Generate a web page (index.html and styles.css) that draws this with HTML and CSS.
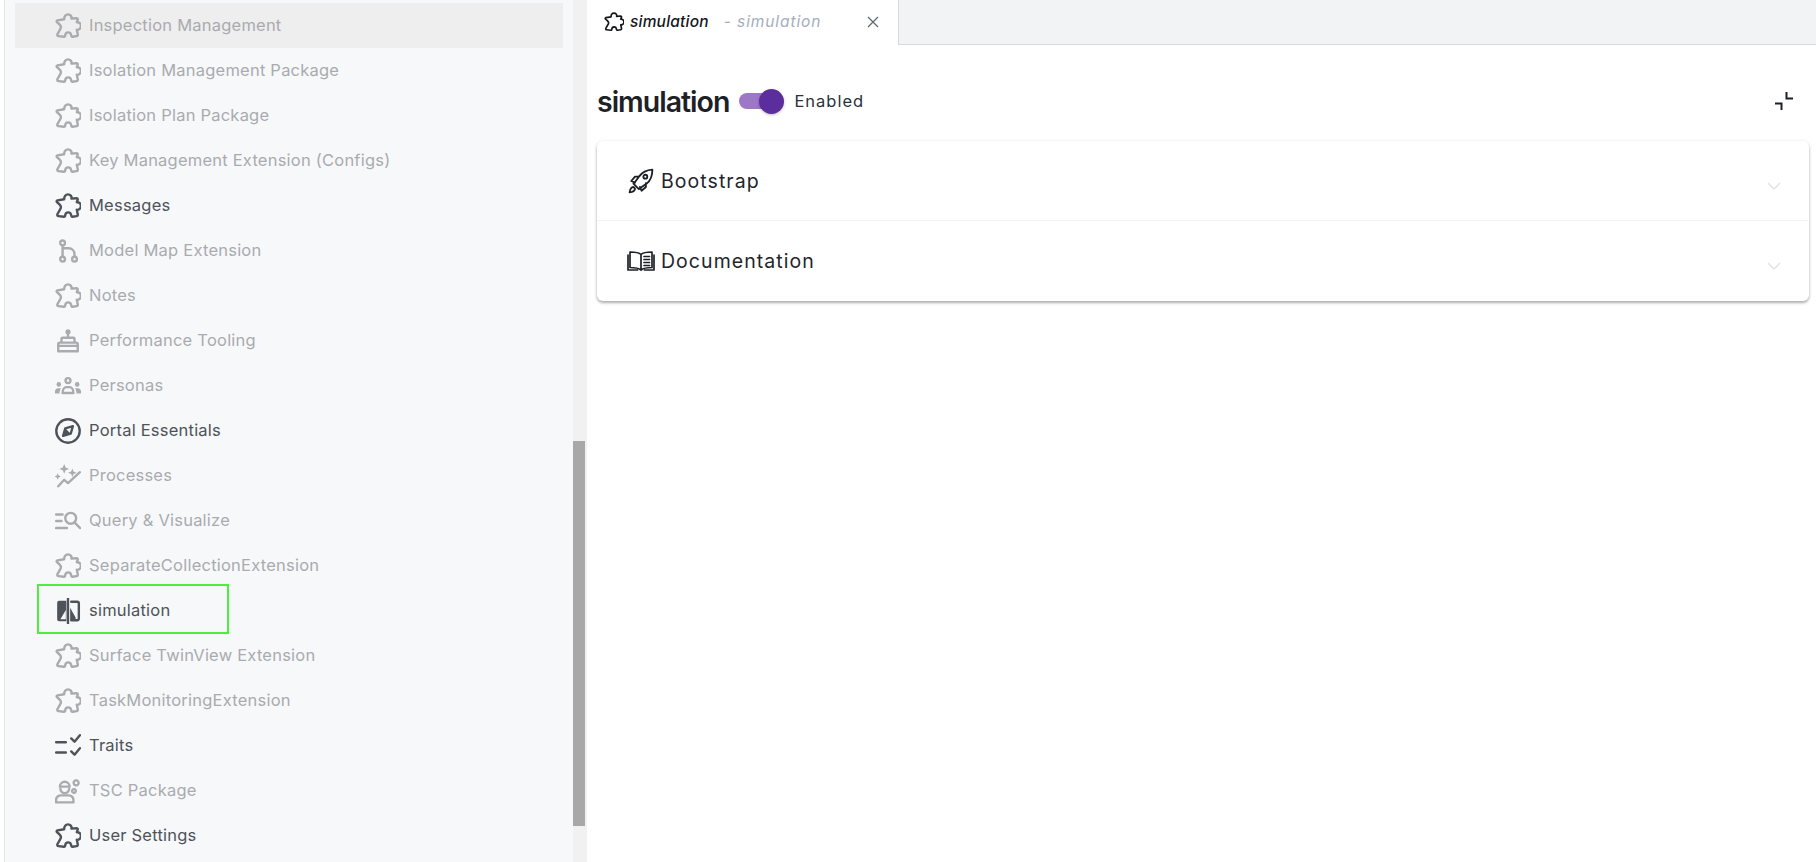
FILE: index.html
```html
<!DOCTYPE html>
<html lang="en">
<head>
<meta charset="utf-8">
<title>simulation</title>
<link rel="stylesheet" href="styles.css">
</head>
<body>
<svg class="defs" width="0" height="0" aria-hidden="true">
  <symbol id="puzzle" viewBox="0 0 24 24"><path d="M8.500 5.800C8.300 3 10 1.300 12 1.300c2 0 3.700 1.700 3.200 3.900l4.500-.4c1 0 1.400.6 1.300 1.300l-.9 2.400c2.300-.2 3.800 1.500 3.800 3.500 0 2.200-1.800 3.800-3.800 3.500l.9 4.200c.2.900-.3 1.500-1 1.600l-3.800.6c-.7.100-1-.2-1.100-.8-.3-1.900-1.500-3.200-2.900-3.200-1.500 0-2.700 1.300-2.900 3.100-.1.700-.5 1-1.100.9l-5-.6c-1-.1-1.300-.9-1-1.700l2.400-4.300c.8-1.100 1-2 .8-2.800-.2-.8-.8-1.400-1.400-2.100L1.800 8.500c-.6-.8-.3-1.500.5-1.700z"/></symbol>
  <symbol id="branch" viewBox="0 0 24 24"><circle cx="7" cy="4.500" r="2.200"/><circle cx="7" cy="19.500" r="2.200"/><circle cx="18" cy="19.500" r="2.200"/><path d="M7 6.700v10.600M7 9.500h5.500c3.300 0 5.500 2.400 5.500 5.500v2.300"/></symbol>
  <symbol id="cake" viewBox="0 0 24 24"><path d="M3 21.500h18v-6.500a1.500 1.500 0 0 0-1.500-1.500h-15a1.500 1.500 0 0 0-1.500 1.500zM3 16.500h18M6 13.500v-3.500a1 1 0 0 1 1-1h10a1 1 0 0 1 1 1v3.500M12 9v-4"/><circle cx="12" cy="3.500" r="1.300" class="solid"/></symbol>
  <symbol id="people" viewBox="0 0 24 24"><g class="solid nostroke"><circle cx="3.500" cy="10.500" r="2.100"/><circle cx="20.500" cy="10.500" r="2.100"/><path d="M-.5 19c0-3 1.500-5 3-5h3c-.8 1.300-1.300 3-1.300 5zM24.500 19c0-3-1.500-5-3-5h-3c.8 1.300 1.300 3 1.300 5z"/></g><circle cx="12" cy="7" r="2.300"/><path d="M7 18.500c0-3.500 1.800-5.500 3.500-5.500h3c1.700 0 3.500 2 3.500 5.500z"/></symbol>
  <symbol id="compass" viewBox="0 0 24 24"><circle cx="12" cy="12" r="10.800"/><path d="M16.500 7.500 14.500 14.500 7.500 16.500 9.500 9.500z"/><path class="solid nostroke" d="M7.500 16.500 9.500 9.500 14.500 14.500z"/></symbol>
  <symbol id="sparkle" viewBox="0 0 24 24"><path d="M3 21.500 8.500 15.500l3.500 3L23 8.500"/><path class="solid nostroke" d="M8.500 1l1.300 3.200 3.200 1.300-3.200 1.300-1.300 3.200-1.300-3.200L4 5.500l3.200-1.300zM16 5l1.100 2.900 2.900 1.100-2.900 1.100-1.100 2.900-1.100-2.900L12 9l2.900-1.100zM2.500 9.500l.9 2.100 2.100.9-2.100.9-.9 2.100-.9-2.100-2.100-.9 2.100-.9z"/></symbol>
  <symbol id="query" viewBox="0 0 24 24"><path d="M1 6h6M1 12h5M1 18.500h10"/><circle cx="14.500" cy="9.500" r="5"/><path d="M18 13.300l5.200 5.200"/></symbol>
  <symbol id="split" viewBox="0 0 24 24"><path class="solid nostroke" fill-rule="evenodd" d="M3.800 2.500h6.700v19H3.800A1.800 1.800 0 0 1 2 19.700V4.300a1.800 1.800 0 0 1 1.800-1.800zM10 11 5 19.500h5z"/><path d="M12 0v24"/><path d="M15 3.500h5.500a1.500 1.500 0 0 1 1.500 1.500v14a1.500 1.500 0 0 1-1.500 1.500H15"/><path class="solid nostroke" d="M14 9l5 9v2h-5z"/></symbol>
  <symbol id="traits" viewBox="0 0 24 24"><path d="M1 8.500h9M1 18h9M15 5l3 3 5-6M15 17l3 3 5-6"/></symbol>
  <symbol id="worker" viewBox="0 0 24 24"><path d="M4.500 8a4.500 4.500 0 0 1 9 0zM5 10a4 4 0 0 0 8 0"/><path d="M1 22.500v-2.500c0-2.500 2.500-4 4.500-4h7c2 0 4.500 1.500 4.500 4v2.500z"/><circle cx="19.500" cy="4.500" r="2.300" stroke-dasharray="1.600 .8"/><circle cx="17.500" cy="12" r="1.700" stroke-dasharray="1.300 .7"/></symbol>
  <symbol id="rocket" viewBox="0 0 24 24"><path d="M22.500 1.500c-5.500.3-9.500 2.500-12.500 6.500l-3.500 5-1.500 1.500 5 5 2-1.500 5-3.500c4-3 5.500-7 5.500-13zM10 8H6.500l-3.500 4 3.500 1.500M16.500 14v3.500l-4 3.500-1.500-3.500"/><circle cx="16" cy="8" r="1.800"/><path d="M5 17.500c-1.800.3-3 1.700-3.500 5 3-.3 4.800-1.700 5-3.500z"/></symbol>
  <symbol id="book" viewBox="0 0 28 24"><path d="M14 5.500C12 3.500 9 3 3 3v15.500c5.500 0 8.500.5 11 2.500 2.500-2 5.500-2.500 11-2.500V3C19 3 16 3.500 14 5.500zM14 5.500V21M1 6v15h9.500M27 6v15h-9.500M17 7.500h5.500M17 10.500h5.500M17 13.500h5.500M17 16.500h5.500"/></symbol>
</svg>

<div class="page">
  <div class="edge"></div>
  <aside class="sidebar">
    <ul class="nav">
      <li class="row muted hover"><svg class="ico"><use href="#puzzle"/></svg><span>Inspection Management</span></li>
      <li class="row muted"><svg class="ico"><use href="#puzzle"/></svg><span>Isolation Management Package</span></li>
      <li class="row muted"><svg class="ico"><use href="#puzzle"/></svg><span>Isolation Plan Package</span></li>
      <li class="row muted"><svg class="ico"><use href="#puzzle"/></svg><span>Key Management Extension (Configs)</span></li>
      <li class="row"><svg class="ico"><use href="#puzzle"/></svg><span>Messages</span></li>
      <li class="row muted"><svg class="ico"><use href="#branch"/></svg><span>Model Map Extension</span></li>
      <li class="row muted"><svg class="ico"><use href="#puzzle"/></svg><span>Notes</span></li>
      <li class="row muted"><svg class="ico"><use href="#cake"/></svg><span>Performance Tooling</span></li>
      <li class="row muted"><svg class="ico"><use href="#people"/></svg><span>Personas</span></li>
      <li class="row"><svg class="ico"><use href="#compass"/></svg><span>Portal Essentials</span></li>
      <li class="row muted"><svg class="ico"><use href="#sparkle"/></svg><span>Processes</span></li>
      <li class="row muted"><svg class="ico"><use href="#query"/></svg><span>Query &amp; Visualize</span></li>
      <li class="row muted"><svg class="ico"><use href="#puzzle"/></svg><span>SeparateCollectionExtension</span></li>
      <li class="row marked"><svg class="ico"><use href="#split"/></svg><span>simulation</span><i class="mark"></i></li>
      <li class="row muted"><svg class="ico"><use href="#puzzle"/></svg><span>Surface TwinView Extension</span></li>
      <li class="row muted"><svg class="ico"><use href="#puzzle"/></svg><span>TaskMonitoringExtension</span></li>
      <li class="row"><svg class="ico"><use href="#traits"/></svg><span>Traits</span></li>
      <li class="row muted"><svg class="ico"><use href="#worker"/></svg><span>TSC Package</span></li>
      <li class="row"><svg class="ico"><use href="#puzzle"/></svg><span>User Settings</span></li>
    </ul>
  </aside>
  <div class="track"><div class="thumb"></div></div>
  <main class="main">
    <div class="tabbar">
      <div class="tab">
        <svg class="tab-ico"><use href="#puzzle"/></svg>
        <span class="tab-name">simulation</span>
        <span class="tab-sub">- simulation</span>
        <svg class="tab-close" viewBox="0 0 12 12"><path d="M1 1l10 10M11 1 1 11"/></svg>
      </div>
      <div class="tab-fill"></div>
    </div>
    <section class="content">
      <header class="head">
        <h1 class="title">simulation</h1>
        <div class="toggle"><i class="knob"></i></div>
        <span class="state">Enabled</span>
        <svg class="collapse" viewBox="0 0 18 18"><path d="M11.500 0v6.500H18M0 11.500h6.500V18"/></svg>
      </header>
      <div class="card">
        <div class="panel">
          <svg class="panel-ico"><use href="#rocket"/></svg>
          <span class="panel-label">Bootstrap</span>
          <svg class="chev" viewBox="0 0 14 8"><path d="M1 1l6 6 6-6"/></svg>
        </div>
        <div class="panel">
          <svg class="panel-ico"><use href="#book"/></svg>
          <span class="panel-label">Documentation</span>
          <svg class="chev" viewBox="0 0 14 8"><path d="M1 1l6 6 6-6"/></svg>
        </div>
      </div>
    </section>
  </main>
</div>
</body>
</html>
```
FILE: styles.css
```css
* { box-sizing: border-box; }
html, body { margin: 0; height: 100%; overflow: hidden; background: #fff; }
body { font-family: Inter, Roboto, "Liberation Sans", sans-serif; color: #1d2126; }
.defs { position: absolute; }
.solid { fill: currentColor; }
.nostroke { stroke: none; }
.ico, .tab-ico, .panel-ico { fill: none; stroke: currentColor; stroke-linecap: round; stroke-linejoin: round; }

.page { display: flex; height: 862px; }
.edge { width: 5px; border-right: 1px solid #e3e4e6; }
.sidebar { width: 568px; background: #f7f8fa; padding: 3px 10px 0; overflow: hidden; }
.nav { list-style: none; margin: 0; padding: 0; }
.row { position: relative; display: flex; align-items: center; height: 45px; padding-left: 40px; font-size: 16.500px; letter-spacing: .22px; color: #4e5359; white-space: nowrap; }
.row span { padding-bottom: 2px; }
.row.muted { color: #a9abaf; }
.row.hover { background: #eeeeee; }
.ico { width: 26px; height: 26px; margin-right: 8px; flex: none; stroke-width: 2.200; }
.mark { position: absolute; left: 22px; top: -4px; width: 192px; height: 50px; border: 2px solid #4cf03a; }

.track { width: 14px; background: #f1f1f1; }
.thumb { width: 12px; height: 385px; margin-top: 441px; background: #a8a8a8; }

.main { flex: 1; min-width: 0; display: flex; flex-direction: column; }
.tabbar { display: flex; height: 45px; }
.tab { display: flex; align-items: center; width: 311px; padding-left: 17px; padding-bottom: 2px; background: #fff; font-style: italic; font-size: 15.500px; }
.tab-ico { width: 20px; height: 20px; margin-right: 6px; color: #14171a; stroke-width: 2; }
.tab-name { font-weight: 500; letter-spacing: .2px; color: #14171a; margin-right: 15px; }
.tab-sub { letter-spacing: .9px; color: #a4aec0; }
.tab-close { width: 12px; height: 12px; margin-left: auto; margin-right: 19px; fill: none; stroke: #5d6875; stroke-width: 1.300; }
.tab-fill { flex: 1; background: #f1f3f5; border-left: 1px solid #d6d9dd; border-bottom: 1px solid #d6d9dd; }

.content { flex: 1; padding: 0 7px 0 10px; }
.head { display: flex; align-items: center; height: 96px; padding-top: 16px; }
.title { margin: 0; font-size: 28.500px; font-weight: 600; letter-spacing: -1px; color: #1d2126; }
.toggle { position: relative; width: 35px; height: 16px; margin-left: 10px; border-radius: 8px; background: #9d78c6; }
.knob { position: absolute; left: 20px; top: -4.500px; width: 25px; height: 25px; border-radius: 50%; background: #5c2d9c; box-shadow: 0 1px 3px rgba(0,0,0,.25); }
.state { margin-left: 20px; font-size: 16.500px; letter-spacing: 1px; color: #2a3138; }
.collapse { width: 18px; height: 18px; margin-left: auto; margin-right: 16px; fill: none; stroke: #1d2126; stroke-width: 2; }

.card { display: grid; grid-template-rows: 79px 81px; border-radius: 6px; background: #fff; box-shadow: 0 2px 3px rgba(0,0,0,.3), 0 0 4px rgba(0,0,0,.06); }
.panel { display: flex; align-items: center; padding: 0 28px 0 30px; }
.panel + .panel { border-top: 1px solid #f4f4f5; }
.panel-ico { width: 28px; height: 26px; margin-right: 6px; color: #1d2126; stroke-width: 1.700; }
.panel-label { font-size: 19.500px; letter-spacing: 1.050px; color: #1f252b; }
.chev { width: 14px; height: 8px; margin-left: auto; margin-top: 10px; fill: none; stroke: #e2e3e7; stroke-width: 1.500; }
```
